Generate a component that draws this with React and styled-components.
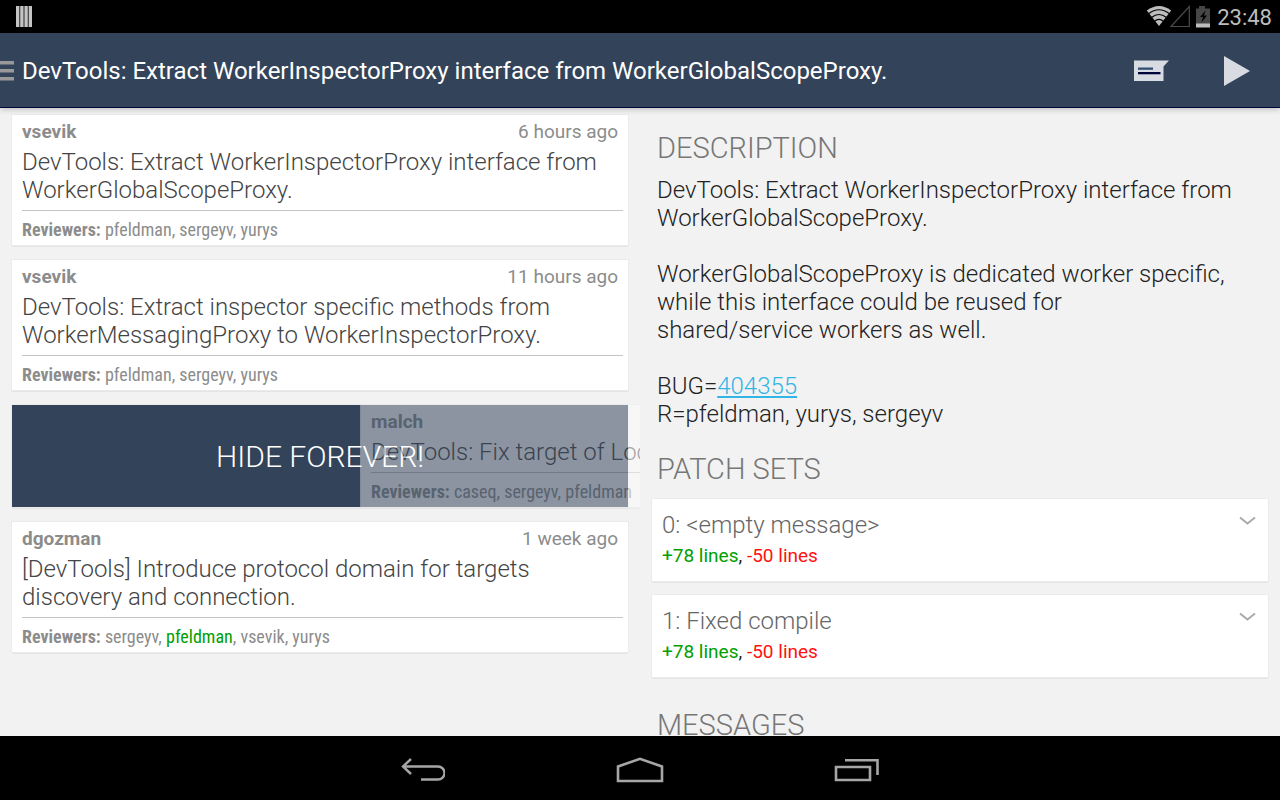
import React from "react";
import styled, { createGlobalStyle } from "styled-components";

const GlobalStyle = createGlobalStyle`
  * {
    box-sizing: border-box;
  }
  body {
    margin: 0;
    background: #f2f2f2;
    font-family: Roboto, "Liberation Sans", sans-serif;
  }
  h1, h2, h3, p {
    margin: 0;
  }
`;

const Screen = styled.div`
  display: flex;
  flex-direction: column;
  height: 100vh;
`;

const StatusBar = styled.div`
  display: flex;
  align-items: center;
  justify-content: space-between;
  flex-shrink: 0;
  height: 33px;
  padding: 0 8px 0 16px;
  background: #000;
  color: #bdbdbd;
  font-size: 22px;
  svg {
    display: block;
  }
`;

const StatusGroup = styled.div`
  display: flex;
  align-items: center;
`;

const Clock = styled.time`
  margin-left: 6px;
  padding-top: 2px;
`;

const IconButton = styled.button`
  display: flex;
  align-items: center;
  justify-content: center;
  padding: 0;
  border: 0;
  background: none;
  color: inherit;
  cursor: pointer;
`;

const ActionBar = styled.header`
  position: relative;
  z-index: 1;
  display: flex;
  align-items: center;
  flex-shrink: 0;
  height: 75px;
  padding-top: 2px;
  background: #334359;
  border-bottom: 1px solid #00053c;
  box-shadow: 0 1px 6px rgba(0, 0, 0, 0.25);
  color: #fff;
  h1 {
    flex: 1;
    margin-left: 8px;
    font-size: 24px;
    font-weight: 400;
    line-height: 32px;
  }
`;

const ActionButton = styled(IconButton)`
  width: 86px;
  height: 70px;
`;

const Panes = styled.main`
  display: grid;
  grid-template-columns: 1fr 1fr;
  flex: 1;
  min-height: 0;
`;

const IssueList = styled.section`
  display: flex;
  flex-direction: column;
  gap: 15px;
  padding: 7px 12px;
  overflow: hidden;
`;

const Card = styled.article`
  background: #fff;
  box-shadow: 0 0 0 1px #ebebeb, 0 2px 0 #e4e4e4;
`;

const StyledIssue = styled(Card)`
  padding: 5px 5px 3px 10px;
  h3 {
    font-size: 24px;
    font-weight: 300;
    line-height: 28px;
    color: #444;
  }
`;

const IssueHead = styled.div`
  display: flex;
  justify-content: space-between;
  margin-bottom: 4px;
  padding-right: 5px;
  font-size: 19px;
  line-height: 24px;
  color: #8c8c8c;
`;

const Reviewers = styled.p`
  margin-top: 6px;
  padding-top: 7px;
  border-top: 1px solid #c4c4c4;
  font-family: "Roboto Condensed", Roboto, "Liberation Sans", sans-serif;
  font-size: 18px;
  line-height: 24px;
  white-space: nowrap;
  color: #8c8c8c;
`;

const Approved = styled.span`
  color: #00a000;
`;

const SwipeRow = styled.div`
  position: relative;
  display: grid;
  background: #334359;
  box-shadow: 0 0 0 1px #ebebeb, 0 2px 0 #e4e4e4;
`;

const SwipeLabel = styled.div`
  position: absolute;
  inset: 0;
  display: flex;
  align-items: center;
  justify-content: center;
  font-size: 30px;
  font-weight: 300;
  color: #fff;
`;

const Swiped = styled.div`
  position: relative;
  left: ${({ $offset }) => $offset}px;
  width: 100%;
  opacity: 0.43;
  h3 {
    white-space: nowrap;
  }
`;

const Details = styled.section`
  padding: 22px 12px 0;
  overflow: hidden;
`;

const SectionTitle = styled.h2`
  margin-top: ${({ $space }) => $space || 0}px;
  padding-left: 5px;
  font-size: 29px;
  font-weight: 300;
  line-height: 36px;
  color: #777;
`;

const Description = styled.p`
  margin-top: 10px;
  padding: 0 5px;
  font-size: 24px;
  font-weight: 300;
  line-height: 28px;
  white-space: pre-line;
  color: #222;
  a {
    color: #33b5e5;
  }
`;

const NoWrap = styled.span`
  white-space: nowrap;
`;

const PatchList = styled.div`
  display: flex;
  flex-direction: column;
  gap: 14px;
  margin-top: 12px;
`;

const StyledPatch = styled(Card)`
  display: flex;
  justify-content: space-between;
  align-items: flex-start;
  padding: 10px;
  h3 {
    font-size: 24px;
    font-weight: 300;
    line-height: 32px;
    color: #666;
  }
`;

const PatchToggle = styled(IconButton)`
  width: 22px;
  height: 24px;
`;

const LineCount = styled.p`
  font-size: 19px;
  line-height: 30px;
  color: #222;
`;

const Added = styled.span`
  color: #00a000;
`;

const Removed = styled.span`
  color: #f11;
`;

const NavBar = styled.nav`
  display: flex;
  justify-content: center;
  flex-shrink: 0;
  height: 64px;
  padding-top: 3px;
  background: #000;
`;

const NavButton = styled(IconButton)`
  width: 217px;
`;

const issues = [
  {
    author: "vsevik",
    time: "6 hours ago",
    title: "DevTools: Extract WorkerInspectorProxy interface from WorkerGlobalScopeProxy.",
    reviewers: ["pfeldman", "sergeyv", "yurys"],
  },
  {
    author: "vsevik",
    time: "11 hours ago",
    title: "DevTools: Extract inspector specific methods from WorkerMessagingProxy to WorkerInspectorProxy.",
    reviewers: ["pfeldman", "sergeyv", "yurys"],
  },
  {
    author: "malch",
    title: "DevTools: Fix target of Loc",
    reviewers: ["caseq", "sergeyv", "pfeldman"],
    swipe: 349,
  },
  {
    author: "dgozman",
    time: "1 week ago",
    title: "[DevTools] Introduce protocol domain for targets discovery and connection.",
    reviewers: ["sergeyv", "pfeldman", "vsevik", "yurys"],
    approved: "pfeldman",
  },
];

const patchSets = [
  { title: "0: <empty message>", added: 78, removed: 50 },
  { title: "1: Fixed compile", added: 78, removed: 50 },
];

const StatusIcon = () => (
  <svg width="16" height="21" viewBox="0 0 16 21" fill="#c4c4c4">
    <path d="M0 0h3.400v21H0zM4.200 0h3.400v21H4.200zM8.400 0h3.400v21H8.400zM12.600 0H16v21h-3.400z" />
  </svg>
);

const SignalIcons = () => (
  <svg width="65" height="24" viewBox="0 0 65 24" fill="none">
    <path d="M.8 5.500Q13 -3.500 25.200 5.500L13 21z" fill="#bdbdbd" />
    <path d="M2.500 8.700Q13 .8 23.500 8.700M5.500 12.500Q13 6.500 20.500 12.500M8.500 16.200Q13 12.500 17.500 16.200" stroke="#000" strokeWidth="1.200" />
    <path d="M25 21.500L43.300 1.500v20z" stroke="#4a4a4a" strokeWidth="1.200" />
    <path d="M50 3.500h3V1h6v2.500h5V21.500H50z" fill="#464646" />
    <path d="M50 18.500h14v4H50z" fill="#bdbdbd" />
    <path d="M59.500 5.500L54 12h3l-1.500 5.500L61 10.500h-3z" fill="#000" />
  </svg>
);

const MenuIcon = () => (
  <svg width="14" height="20" viewBox="0 0 14 20" fill="#999">
    <path d="M0 0h14v3.500H0zM0 8h14v3.500H0zM0 16h14v3.500H0z" />
  </svg>
);

const MessageIcon = () => (
  <svg width="36" height="22" viewBox="0 0 36 22">
    <path d="M1 .5H36L30.500 6.500V21H1z" fill="#d8dbe2" />
    <path d="M5 7.500h15v2.300H5z" fill="#334f73" />
    <path d="M5 12h22.500v2.300H5z" fill="#00053c" />
  </svg>
);

const PlayIcon = () => (
  <svg width="26" height="32" viewBox="0 0 26 32">
    <path d="M0 1l26 15L0 31z" fill="#d8dbe2" />
  </svg>
);

const ChevronIcon = () => (
  <svg width="17" height="10" viewBox="0 0 17 10" fill="none">
    <path d="M1 1.500l7.500 6 7.500-6" stroke="#aaa" strokeWidth="2" />
  </svg>
);

const BackIcon = () => (
  <svg width="44" height="24" viewBox="0 0 44 24" fill="none" stroke="#a6a6a6" strokeWidth="2.400">
    <path d="M2 8.500h35a6.500 6.500 0 0 1 0 13H20M10 1L2 8.500 10 16" />
  </svg>
);

const HomeIcon = () => (
  <svg width="48" height="26" viewBox="0 0 48 26" fill="none" stroke="#a6a6a6" strokeWidth="2.600">
    <path d="M2 24V9.500L24 1.800 46 9.500V24z" />
  </svg>
);

const RecentIcon = () => (
  <svg width="46" height="24" viewBox="0 0 46 24" fill="none" stroke="#a6a6a6" strokeWidth="2.600">
    <path d="M2 9h34v13H2zM11 2.300h32.500V17" />
  </svg>
);

const Issue = ({ author, time, title, reviewers, approved }) => {
  return (
    <StyledIssue>
      <IssueHead>
        <b>{author}</b>
        {time && <time>{time}</time>}
      </IssueHead>
      <h3>{title}</h3>
      <Reviewers>
        <b>Reviewers:</b>{" "}
        {reviewers.map((name, index) => (
          <React.Fragment key={name}>
            {index > 0 && ", "}
            {name === approved ? <Approved>{name}</Approved> : name}
          </React.Fragment>
        ))}
      </Reviewers>
    </StyledIssue>
  );
};

const App = () => {
  return (
    <Screen>
      <GlobalStyle />
      <StatusBar>
        <StatusIcon />
        <StatusGroup>
          <SignalIcons />
          <Clock>23:48</Clock>
        </StatusGroup>
      </StatusBar>
      <ActionBar>
        <IconButton aria-label="Menu">
          <MenuIcon />
        </IconButton>
        <h1>DevTools: Extract WorkerInspectorProxy interface from WorkerGlobalScopeProxy.</h1>
        <ActionButton aria-label="Comment">
          <MessageIcon />
        </ActionButton>
        <ActionButton aria-label="Publish">
          <PlayIcon />
        </ActionButton>
      </ActionBar>
      <Panes>
        <IssueList>
          {issues.map((issue) =>
            issue.swipe ? (
              <SwipeRow key={issue.title}>
                <SwipeLabel>HIDE FOREVER!</SwipeLabel>
                <Swiped $offset={issue.swipe}>
                  <Issue {...issue} />
                </Swiped>
              </SwipeRow>
            ) : (
              <Issue key={issue.title} {...issue} />
            )
          )}
        </IssueList>
        <Details>
          <SectionTitle>DESCRIPTION</SectionTitle>
          <Description>
            {"DevTools: Extract WorkerInspectorProxy interface from WorkerGlobalScopeProxy.\n\n"}
            {"WorkerGlobalScopeProxy is dedicated worker specific, while this interface could be reused for "}
            <NoWrap>shared/service workers</NoWrap>
            {" as well.\n\n"}
            BUG=<a href="#404355">404355</a>
            {"\nR=pfeldman, yurys, sergeyv"}
          </Description>
          <SectionTitle $space={23}>PATCH SETS</SectionTitle>
          <PatchList>
            {patchSets.map(({ title, added, removed }) => (
              <StyledPatch key={title}>
                <div>
                  <h3>{title}</h3>
                  <LineCount>
                    <Added>+{added} lines</Added>, <Removed>-{removed} lines</Removed>
                  </LineCount>
                </div>
                <PatchToggle aria-label={`Expand ${title}`}>
                  <ChevronIcon />
                </PatchToggle>
              </StyledPatch>
            ))}
          </PatchList>
          <SectionTitle $space={30}>MESSAGES</SectionTitle>
        </Details>
      </Panes>
      <NavBar>
        <NavButton aria-label="Back">
          <BackIcon />
        </NavButton>
        <NavButton aria-label="Home">
          <HomeIcon />
        </NavButton>
        <NavButton aria-label="Recent apps">
          <RecentIcon />
        </NavButton>
      </NavBar>
    </Screen>
  );
};

export default App;
